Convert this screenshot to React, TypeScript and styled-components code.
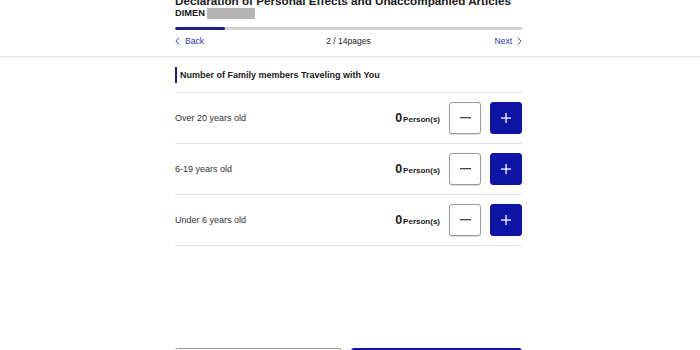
import { createGlobalStyle } from "styled-components";
import styled from "styled-components";

const BLUE = "#0d14a6";

const GlobalStyle = createGlobalStyle`
  html, body {
    margin: 0;
    padding: 0;
    background: #fff;
  }
  body {
    font-family: "Liberation Sans", Arial, sans-serif;
    color: #222;
    overflow: hidden;
  }
`;

interface AgeRow {
  label: string;
  count: number;
}

const rows: AgeRow[] = [
  { label: "Over 20 years old", count: 0 },
  { label: "6-19 years old", count: 0 },
  { label: "Under 6 years old", count: 0 },
];

const Chevron = ({ dir }: { dir: "left" | "right" }) => (
  <svg width="5" height="8" viewBox="0 0 5 8" fill="none">
    <path
      d={dir === "left" ? "M4.2 0.6 L0.9 4 L4.2 7.4" : "M0.8 0.6 L4.1 4 L0.8 7.4"}
      stroke="currentColor"
      strokeWidth="0.9"
    />
  </svg>
);

const App = () => {
  const step = 2;
  const total = 14;
  return (
    <>
      <GlobalStyle />
      <Header>
        <Inner>
          <Title>Declaration of Personal Effects and Unaccompanied Articles</Title>
          <SubTitle>
            DIMEN<Redacted />
          </SubTitle>
          <Progress>
            <ProgressFill style={{ width: `${(step / total) * 100}%` }} />
          </Progress>
          <Nav>
            <NavLink>
              <Chevron dir="left" />
              Back
            </NavLink>
            <PageCount>
              {step} / {total}pages
            </PageCount>
            <NavLink $right>
              Next
              <Chevron dir="right" />
            </NavLink>
          </Nav>
        </Inner>
      </Header>
      <Inner>
        <SectionTitle>Number of Family members Traveling with You</SectionTitle>
        <List>
          {rows.map((row) => (
            <Row key={row.label}>
              <Label>{row.label}</Label>
              <Count>
                <strong>{row.count}</strong>
                <span>Person(s)</span>
              </Count>
              <StepButton type="button" aria-label="decrease">
                <svg width="11" height="2" viewBox="0 0 11 2">
                  <rect width="11" height="1.3" fill="#444" />
                </svg>
              </StepButton>
              <StepButton type="button" $primary aria-label="increase">
                <svg width="10" height="10" viewBox="0 0 10 10">
                  <rect x="4.4" y="0" width="1.3" height="10" fill="#fff" />
                  <rect x="0" y="4.4" width="10" height="1.3" fill="#fff" />
                </svg>
              </StepButton>
            </Row>
          ))}
        </List>
        <Footer>
          <FooterButton type="button" aria-label="Previous" />
          <FooterButton type="button" $primary aria-label="Next" />
        </Footer>
      </Inner>
    </>
  );
};

const Header = styled.header`
  border-bottom: 1px solid #e2e2e2;
  box-shadow: 0 1px 2px rgba(0, 0, 0, 0.05);
  padding-bottom: 9px;
`;

const Inner = styled.div`
  width: 347px;
  margin-left: calc(50% - 175px);
`;

const Title = styled.h1`
  margin: -6px 0 0;
  font-size: 11.7px;
  line-height: 13px;
  font-weight: 700;
  color: #1a1a1a;
  white-space: nowrap;
`;

const SubTitle = styled.div`
  display: flex;
  align-items: center;
  font-size: 9.3px;
  line-height: 12px;
  font-weight: 700;
  color: #1a1a1a;
`;

const Redacted = styled.span`
  display: inline-block;
  width: 48px;
  height: 11px;
  margin-left: 2px;
  background: #b4b4b4;
  filter: blur(0.4px);
`;

const Progress = styled.div`
  margin-top: 8px;
  height: 3px;
  border-radius: 2px;
  background: #d2d2d2;
  overflow: hidden;
`;

const ProgressFill = styled.div`
  height: 100%;
  border-radius: 2px;
  background: #1d1f8f;
`;

const Nav = styled.div`
  margin-top: 5px;
  display: grid;
  grid-template-columns: 1fr auto 1fr;
  align-items: center;
  height: 12px;
`;

const NavLink = styled.a<{ $right?: boolean }>`
  display: flex;
  align-items: center;
  gap: 5px;
  justify-self: ${(p) => (p.$right ? "end" : "start")};
  font-size: 8.5px;
  color: #2b33b5;
  cursor: pointer;
`;

const PageCount = styled.span`
  font-size: 8.5px;
  color: #222;
`;

const SectionTitle = styled.h2`
  margin: 10px 0 0;
  padding-left: 3px;
  border-left: 2.5px solid #1d1f8f;
  font-size: 9px;
  line-height: 16px;
  font-weight: 700;
  color: #1a1a1a;
`;

const List = styled.div`
  margin-top: 9px;
  border-top: 1px solid #e6e6e6;
`;

const Row = styled.div`
  display: flex;
  align-items: center;
  height: 50px;
  border-bottom: 1px solid #e3e3e3;
`;

const Label = styled.span`
  flex: 1;
  font-size: 9px;
  color: #333;
`;

const Count = styled.span`
  display: flex;
  align-items: baseline;
  gap: 1px;
  margin-right: 9px;
  color: #1a1a1a;
  strong {
    font-size: 12.5px;
    font-weight: 700;
  }
  span {
    font-size: 8px;
    font-weight: 700;
  }
`;

const StepButton = styled.button<{ $primary?: boolean }>`
  display: flex;
  align-items: center;
  justify-content: center;
  width: 32px;
  height: 32px;
  padding: 0;
  margin-left: ${(p) => (p.$primary ? "9px" : "0")};
  border-radius: 3px;
  border: 1px solid ${(p) => (p.$primary ? BLUE : "#9a9a9a")};
  background: ${(p) => (p.$primary ? BLUE : "#fff")};
  box-shadow: ${(p) => (p.$primary ? "none" : "0 1px 1px rgba(0,0,0,0.15)")};
  cursor: pointer;
`;

const Footer = styled.div`
  display: grid;
  grid-template-columns: 167px 1fr;
  gap: 9px;
  margin-top: 102px;
`;

const FooterButton = styled.button<{ $primary?: boolean }>`
  height: 44px;
  border-radius: 3px;
  border: 1px solid ${(p) => (p.$primary ? BLUE : "#9a9a9a")};
  background: ${(p) => (p.$primary ? BLUE : "#fff")};
`;

export default App;
